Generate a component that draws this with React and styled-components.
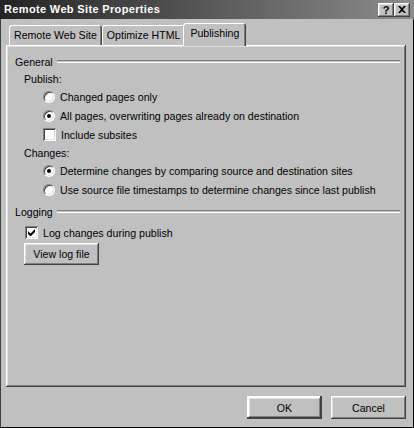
import styled, { createGlobalStyle } from "styled-components";

const GlobalStyle = createGlobalStyle`
    html, body {
        margin: 0;
        padding: 0;
        background: #c0c0c0;
    }
    body {
        font-family: "Liberation Sans", Arial, sans-serif;
        font-size: 10.6px;
        color: #000;
    }
`

const raised = `
    box-shadow: inset -1px -1px #404040, inset 1px 1px #ffffff,
        inset -2px -2px #808080, inset 2px 2px #dfdfdf;
`

const Window = styled.div`
    width: 414px;
    height: 428px;
    box-sizing: border-box;
    background: #c0c0c0;
    display: flex;
    flex-direction: column;
    box-shadow: inset -1px -1px #000, inset 1px 1px #404040;
`

const TitleBar = styled.div`
    height: 19px;
    display: flex;
    align-items: center;
    justify-content: space-between;
    padding: 0 4px 1px 4px;
    box-sizing: border-box;
    background: linear-gradient(to right, #242424, #8c8c8c);
`

const TitleText = styled.span`
    color: #fff;
    font-weight: bold;
    font-size: 11px;
    letter-spacing: 0.35px;
`

const TitleButtons = styled.div`
    display: flex;
    margin-top: 1px;
`

const TitleButton = styled.div`
    width: 16px;
    height: 14px;
    background: #c0c0c0;
    display: flex;
    align-items: center;
    justify-content: center;
    font-weight: bold;
    font-size: 11px;
    ${raised}
`

const Body = styled.div`
    flex: 1;
    display: flex;
    flex-direction: column;
    padding: 4px 8px 0 6px;
`

const TabRow = styled.div`
    display: flex;
    align-items: flex-end;
    height: 22px;
    padding-left: 3px;
    position: relative;
    z-index: 1;
`

const Tab = styled.div`
    height: ${({ $active }) => ($active ? '23px' : '20px')};
    margin: ${({ $active }) => ($active ? '0 -2px -1px -2px' : '0')};
    padding: ${({ $active }) => ($active ? '0 7px 3px 7px' : '0 5px 1px 5px')};
    box-sizing: border-box;
    display: flex;
    align-items: center;
    background: #c0c0c0;
    border-radius: 3px 3px 0 0;
    box-shadow: inset 1px 1px #ffffff, inset -1px 0 #404040, inset -2px 0 #808080;
    position: relative;
    z-index: ${({ $active }) => ($active ? 2 : 1)};
`

const Panel = styled.div`
    height: 342px;
    box-sizing: border-box;
    padding: 7px 6px 0 2px;
    display: flex;
    flex-direction: column;
    ${raised}
`

const GroupHeader = styled.div`
    height: 19px;
    display: flex;
    align-items: center;
    gap: 4px;
    padding-left: 7px;
    margin-top: ${({ $gap }) => $gap || 0}px;
`

const Etched = styled.div`
    flex: 1;
    height: 1px;
    border-top: 1px solid #808080;
    border-bottom: 1px solid #ffffff;
`

const SubLabel = styled.div`
    height: ${({ $h }) => $h}px;
    display: flex;
    align-items: center;
    padding-left: 16px;
`

const OptionRow = styled.label`
    height: 19px;
    display: flex;
    align-items: center;
    gap: 5px;
    padding-left: ${({ $indent }) => $indent}px;
    margin-top: ${({ $gap }) => $gap || 0}px;
`

const Radio = styled.span`
    width: 12px;
    height: 12px;
    box-sizing: border-box;
    border-radius: 50%;
    background: #fff;
    border: 1px solid;
    border-color: #808080 #ffffff #ffffff #808080;
    box-shadow: inset 1px 1px #404040, inset -1px -1px #dfdfdf;
    display: flex;
    align-items: center;
    justify-content: center;
    &::after {
        content: "";
        width: 4px;
        height: 4px;
        border-radius: 50%;
        background: ${({ $on }) => ($on ? '#000' : 'transparent')};
    }
`

const Check = styled.span`
    width: 13px;
    height: 13px;
    box-sizing: border-box;
    background: #fff;
    box-shadow: inset 1px 1px #808080, inset -1px -1px #ffffff,
        inset 2px 2px #404040, inset -2px -2px #dfdfdf;
    display: flex;
    align-items: center;
    justify-content: center;
`

const Button = styled.button`
    width: ${({ $w }) => $w}px;
    height: ${({ $h }) => $h || 23}px;
    font-family: "Liberation Sans", Arial, sans-serif;
    font-size: 10.6px;
    color: #000;
    background: #c0c0c0;
    border: none;
    padding: 0;
    ${raised}
    ${({ $default }) => $default && `
        box-shadow: inset -2px -2px #404040, inset 2px 2px #ffffff,
            inset -3px -3px #808080, inset 3px 3px #dfdfdf, inset 0 0 0 1px #000;
    `}
`

const LogButton = styled(Button)`
    margin: 1px 0 0 16px;
    align-self: flex-start;
`

const Footer = styled.div`
    display: flex;
    justify-content: flex-end;
    gap: 9px;
    padding-top: 9px;
`

function CheckMark() {
    return (
        <svg width="7" height="7" viewBox="0 0 7 7">
            <path d="M0 2v3l2 2h1l4-4V0L2.5 4.5z" fill="#000" />
        </svg>
    )
}

function CloseGlyph() {
    return (
        <svg width="8" height="7" viewBox="0 0 8 7">
            <path d="M0 0h2l2 2 2-2h2L5 3.5 8 7H6L4 5 2 7H0l3-3.5z" fill="#000" />
        </svg>
    )
}

export default function App() {
    return (
        <>
            <GlobalStyle />
            <Window>
                <TitleBar>
                    <TitleText>Remote Web Site Properties</TitleText>
                    <TitleButtons>
                        <TitleButton>?</TitleButton>
                        <TitleButton><CloseGlyph /></TitleButton>
                    </TitleButtons>
                </TitleBar>
                <Body>
                    <TabRow>
                        <Tab>Remote Web Site</Tab>
                        <Tab>Optimize HTML</Tab>
                        <Tab $active>Publishing</Tab>
                    </TabRow>
                    <Panel>
                        <GroupHeader>General<Etched /></GroupHeader>
                        <SubLabel $h={16}>Publish:</SubLabel>
                        <OptionRow $indent={35}><Radio />Changed pages only</OptionRow>
                        <OptionRow $indent={35}><Radio $on />All pages, overwriting pages already on destination</OptionRow>
                        <OptionRow $indent={35}><Check />Include subsites</OptionRow>
                        <SubLabel $h={17}>Changes:</SubLabel>
                        <OptionRow $indent={35}><Radio $on />Determine changes by comparing source and destination sites</OptionRow>
                        <OptionRow $indent={35}><Radio />Use source file timestamps to determine changes since last publish</OptionRow>
                        <GroupHeader $gap={3}>Logging<Etched /></GroupHeader>
                        <OptionRow $indent={17} $gap={2}><Check><CheckMark /></Check>Log changes during publish</OptionRow>
                        <LogButton $w={75} $h={22}>View log file</LogButton>
                    </Panel>
                    <Footer>
                        <Button $w={75} $default>OK</Button>
                        <Button $w={75}>Cancel</Button>
                    </Footer>
                </Body>
            </Window>
        </>
    )
}
